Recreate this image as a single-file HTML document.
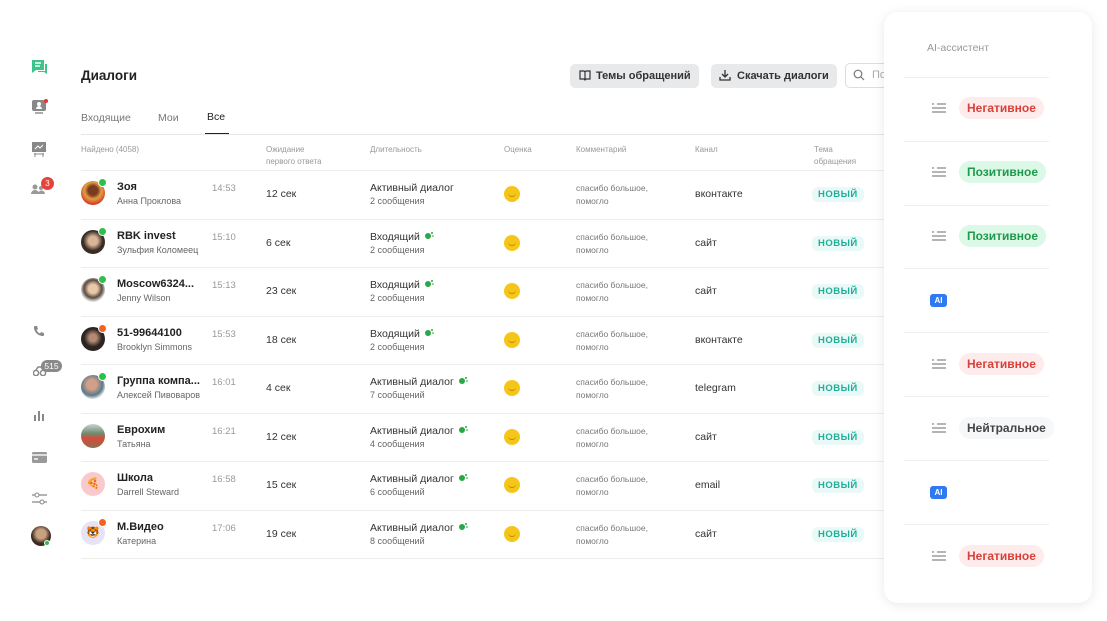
<!DOCTYPE html>
<html><head><meta charset="utf-8"><style>
*{margin:0;padding:0;box-sizing:border-box}
body{width:1107px;height:621px;background:#fff;font-family:"Liberation Sans","Noto Sans CJK SC",sans-serif;color:#222;position:relative;overflow:hidden}
.a{position:absolute;white-space:nowrap}
.row{position:absolute;left:81px;width:820px;height:48.5px;border-bottom:1px solid #ececec}
.av{position:absolute;left:0;top:10px;width:24px;height:24px;border-radius:50%}
.bd{position:absolute;left:17px;top:7px;width:9px;height:9px;border-radius:50%;border:1.5px solid #fff}
.nm{position:absolute;left:36px;top:10px;font-size:11px;font-weight:bold;color:#222}
.sb{position:absolute;left:36px;top:25px;font-size:9px;color:#666}
.tm{position:absolute;left:131px;top:12px;font-size:9.5px;color:#999}
.wt{position:absolute;left:185px;top:17px;font-size:10.5px;color:#333}
.du{position:absolute;left:289px;top:11px;font-size:10.5px;color:#333}
.dm{position:absolute;left:289px;top:25px;font-size:9px;color:#666}
.sm{position:absolute;left:423px;top:15px;width:16px;height:16px;border-radius:50%;background:#f5c518}
.sm:after{content:"";position:absolute;left:4px;top:6px;width:8px;height:4px;border-bottom:1px solid #c08a00;border-radius:0 0 5px 5px}
.cm{position:absolute;left:495px;top:11px;font-size:8.5px;color:#777;line-height:13px}
.ch{position:absolute;left:614px;top:17px;font-size:10.5px;color:#333}
.pl{position:absolute;left:731px;top:16px;padding:2px 6px;font-size:9.5px;font-weight:bold;color:#1fae98;background:#e8f9f7;border-radius:6px;letter-spacing:.5px}
.lf{display:inline-block;vertical-align:top;margin-left:4px}
.hd{position:absolute;top:144px;font-size:8px;color:#999;line-height:12px}
.panel{position:absolute;left:884px;top:12px;width:208px;height:591px;background:#fff;border-radius:14px;box-shadow:0 2px 12px rgba(0,0,0,.09)}
.sep{position:absolute;left:20px;width:145px;height:1px;background:#eeeeee}
.ic{position:absolute;left:47px;width:16px;height:12px}
.tg{position:absolute;left:75px;padding:4px 8px;border-radius:11px;font-size:12px;font-weight:600}
.neg{background:#fdeceb;color:#d9403a}
.pos{background:#dcf8e6;color:#1f9a4c}
.neu{background:#f6f7f8;color:#444}
.ai{position:absolute;left:46px;width:17px;height:13px;background:#2f7af0;border-radius:3px;color:#fff;font-size:8px;font-weight:bold;text-align:center;line-height:13px}
</style></head><body>

<svg class="a" style="left:31px;top:59px" width="17" height="17" viewBox="0 0 17 17"><path d="M1 1h12v10H5l-4 3z" fill="#3cc48a"/><path d="M4 4h6M4 7h5" stroke="#fff" stroke-width="1.4"/><path d="M14 5h2v10l-3-2H7v-1h7z" fill="#3cc48a"/></svg>
<svg class="a" style="left:31px;top:99px" width="17" height="17" viewBox="0 0 17 17"><rect x="1" y="1" width="14" height="11" rx="2" fill="#888"/><circle cx="8" cy="5" r="2" fill="#fff"/><path d="M5 10a3 3 0 0 1 6 0z" fill="#fff"/><rect x="4" y="13" width="8" height="2" fill="#aaa"/><circle cx="15" cy="2" r="2" fill="#e33"/></svg>
<svg class="a" style="left:31px;top:141px" width="17" height="17" viewBox="0 0 17 17"><rect x="1" y="1" width="14" height="10" fill="#888"/><path d="M4 8l3-3 2 2 3-3" stroke="#fff" fill="none"/><path d="M4 12v4M12 12v4M3 13h10" stroke="#888"/></svg>
<svg class="a" style="left:31px;top:183px" width="14" height="12" viewBox="0 0 14 12"><circle cx="4" cy="4" r="2.5" fill="#999"/><circle cx="10" cy="5" r="2" fill="#999"/><path d="M0 11a4 4 0 0 1 8 0zM7 11a3 3 0 0 1 7 0z" fill="#999"/></svg>
<div class="a" style="left:41px;top:177px;width:13px;height:13px;border-radius:50%;background:#e8413a;color:#fff;font-size:8px;text-align:center;line-height:13px">3</div>
<svg class="a" style="left:33px;top:325px" width="12" height="12" viewBox="0 0 12 12"><path d="M2 1l2 0 1 3-1.5 1a7 7 0 0 0 3.5 3.5L8 7l3 1v2c0 1-1 1-2 1A9 9 0 0 1 1 3c0-1 0-2 1-2z" fill="#888"/></svg>
<svg class="a" style="left:33px;top:366px" width="14" height="10" viewBox="0 0 14 10"><circle cx="3" cy="7" r="2.6" fill="none" stroke="#888" stroke-width="1.5"/><circle cx="10" cy="7" r="2.6" fill="none" stroke="#888" stroke-width="1.5"/><path d="M3 4l2-3h3l2 3" stroke="#888" fill="none" stroke-width="1.5"/></svg>
<div class="a" style="left:41px;top:360px;width:21px;height:12px;border-radius:6px;background:#8a8a8a;color:#fff;font-size:8.5px;text-align:center;line-height:12px">515</div>
<svg class="a" style="left:33px;top:409px" width="14" height="12" viewBox="0 0 14 12"><path d="M2 6v6M6 2v10M10 5v7" stroke="#888" stroke-width="2"/></svg>
<svg class="a" style="left:32px;top:452px" width="15" height="11" viewBox="0 0 15 11"><rect width="15" height="11" rx="1.5" fill="#999"/><rect y="2" width="15" height="2" fill="#ddd"/><rect x="2" y="6" width="4" height="2" fill="#ddd"/></svg>
<svg class="a" style="left:32px;top:492px" width="15" height="13" viewBox="0 0 15 13"><path d="M0 3h15M0 10h15" stroke="#888" stroke-width="1.2"/><circle cx="5" cy="3" r="2" fill="#fff" stroke="#888"/><circle cx="10" cy="10" r="2" fill="#fff" stroke="#888"/></svg>
<div class="a" style="left:31px;top:526px;width:20px;height:20px;border-radius:50%;background:radial-gradient(circle at 50% 40%,#c9a17f 30%,#3a2a22 60%)"></div>
<div class="a" style="left:44px;top:540px;width:6px;height:6px;border-radius:50%;background:#2cc04a;border:1px solid #fff"></div>

<div class="a" style="left:81px;top:68px;font-size:13.5px;font-weight:bold">Диалоги</div>
<div class="a" style="left:570px;top:64px;width:129px;height:24px;border-radius:5px;background:#e8e9ea;font-size:11px;font-weight:bold;color:#333;line-height:24px;padding-left:26px">Темы обращений</div>
<svg class="a" style="left:579px;top:70px" width="12" height="11" viewBox="0 0 12 11"><path d="M1 1h4l1 1 1-1h4v8H7l-1 1-1-1H1zM6 2v8" stroke="#333" fill="none" stroke-width="1.2"/></svg>
<div class="a" style="left:711px;top:64px;width:126px;height:24px;border-radius:5px;background:#e8e9ea;font-size:11px;font-weight:bold;color:#333;line-height:24px;padding-left:26px">Скачать диалоги</div>
<svg class="a" style="left:719px;top:69px" width="12" height="12" viewBox="0 0 12 12"><path d="M6 1v7M3 5l3 3 3-3M1 8v3h10V8" stroke="#333" fill="none" stroke-width="1.3"/></svg>
<div class="a" style="left:845px;top:63px;width:60px;height:25px;border-radius:5px;border:1px solid #ddd;font-size:11px;color:#aaa;line-height:23px;padding-left:26px">По</div>
<svg class="a" style="left:853px;top:69px" width="12" height="12" viewBox="0 0 12 12"><circle cx="5" cy="5" r="3.8" stroke="#777" fill="none" stroke-width="1.2"/><path d="M8 8l3 3" stroke="#777" stroke-width="1.2"/></svg>

<div class="a" style="left:81px;top:112px;font-size:10.5px;color:#777">Входящие</div>
<div class="a" style="left:158px;top:112px;font-size:10.5px;color:#777">Мои</div>
<div class="a" style="left:207px;top:111px;font-size:10.5px;color:#222">Все</div>
<div class="a" style="left:205px;top:133px;width:24px;height:2px;background:#222"></div>
<div class="a" style="left:81px;top:134px;width:820px;height:1px;background:#e6e6e6"></div>

<div class="hd" style="left:81px">Найдено (4058)</div>
<div class="hd" style="left:266px">Ожидание<br>первого ответа</div>
<div class="hd" style="left:370px">Длительность</div>
<div class="hd" style="left:504px">Оценка</div>
<div class="hd" style="left:576px">Комментарий</div>
<div class="hd" style="left:695px">Канал</div>
<div class="hd" style="left:814px">Тема<br>обращения</div>
<div class="a" style="left:81px;top:170px;width:820px;height:1px;background:#ececec"></div>

<div class="row" style="top:171px"><div class="av" style="background:radial-gradient(circle at 50% 40%,#7a3b22 25%,#e2a040 45%,#d53528 75%)"></div><div class="bd" style="background:#2cc04a"></div><div class="nm">Зоя</div><div class="sb">Анна Проклова</div><div class="tm">14:53</div><div class="wt">12 сек</div><div class="du">Активный диалог</div><div class="dm">2 сообщения</div><div class="sm"></div><div class="cm">спасибо большое,<br>помогло</div><div class="ch">вконтакте</div><div class="pl">НОВЫЙ</div></div>
<div class="row" style="top:219.5px"><div class="av" style="background:radial-gradient(circle at 50% 45%,#d9b596 25%,#3a2c25 55%)"></div><div class="bd" style="background:#2cc04a"></div><div class="nm">RBK invest</div><div class="sb">Зульфия Коломеец</div><div class="tm">15:10</div><div class="wt">6 сек</div><div class="du">Входящий<svg class="lf" width="11" height="9" viewBox="0 0 11 9"><circle cx="4" cy="5" r="3" fill="#2aa845"/><circle cx="8" cy="2" r="1" fill="#2aa845"/><path d="M8 5h2" stroke="#2aa845"/></svg></div><div class="dm">2 сообщения</div><div class="sm"></div><div class="cm">спасибо большое,<br>помогло</div><div class="ch">сайт</div><div class="pl">НОВЫЙ</div></div>
<div class="row" style="top:268px"><div class="av" style="background:radial-gradient(circle at 50% 45%,#e8c8a8 25%,#5a4a40 50%,#ddd 70%)"></div><div class="bd" style="background:#2cc04a"></div><div class="nm">Moscow6324...</div><div class="sb">Jenny Wilson</div><div class="tm">15:13</div><div class="wt">23 сек</div><div class="du">Входящий<svg class="lf" width="11" height="9" viewBox="0 0 11 9"><circle cx="4" cy="5" r="3" fill="#2aa845"/><circle cx="8" cy="2" r="1" fill="#2aa845"/><path d="M8 5h2" stroke="#2aa845"/></svg></div><div class="dm">2 сообщения</div><div class="sm"></div><div class="cm">спасибо большое,<br>помогло</div><div class="ch">сайт</div><div class="pl">НОВЫЙ</div></div>
<div class="row" style="top:316.5px"><div class="av" style="background:radial-gradient(circle at 50% 45%,#b58a74 20%,#2a2522 50%)"></div><div class="bd" style="background:#f26322"></div><div class="nm">51-99644100</div><div class="sb">Brooklyn Simmons</div><div class="tm">15:53</div><div class="wt">18 сек</div><div class="du">Входящий<svg class="lf" width="11" height="9" viewBox="0 0 11 9"><circle cx="4" cy="5" r="3" fill="#2aa845"/><circle cx="8" cy="2" r="1" fill="#2aa845"/><path d="M8 5h2" stroke="#2aa845"/></svg></div><div class="dm">2 сообщения</div><div class="sm"></div><div class="cm">спасибо большое,<br>помогло</div><div class="ch">вконтакте</div><div class="pl">НОВЫЙ</div></div>
<div class="row" style="top:365px"><div class="av" style="background:radial-gradient(circle at 45% 40%,#d2a088 25%,#5a7a8a 55%,#eee 75%)"></div><div class="bd" style="background:#2cc04a"></div><div class="nm">Группа компа...</div><div class="sb">Алексей Пивоваров</div><div class="tm">16:01</div><div class="wt">4 сек</div><div class="du">Активный диалог<svg class="lf" width="11" height="9" viewBox="0 0 11 9"><circle cx="4" cy="5" r="3" fill="#2aa845"/><circle cx="8" cy="2" r="1" fill="#2aa845"/><path d="M8 5h2" stroke="#2aa845"/></svg></div><div class="dm">7 сообщений</div><div class="sm"></div><div class="cm">спасибо большое,<br>помогло</div><div class="ch">telegram</div><div class="pl">НОВЫЙ</div></div>
<div class="row" style="top:413.5px"><div class="av" style="background:linear-gradient(#c8d4d8 0,#6f8a6a 40%,#d8493b 60%,#8a7050 100%)"></div><div class="nm">Еврохим</div><div class="sb">Татьяна</div><div class="tm">16:21</div><div class="wt">12 сек</div><div class="du">Активный диалог<svg class="lf" width="11" height="9" viewBox="0 0 11 9"><circle cx="4" cy="5" r="3" fill="#2aa845"/><circle cx="8" cy="2" r="1" fill="#2aa845"/><path d="M8 5h2" stroke="#2aa845"/></svg></div><div class="dm">4 сообщения</div><div class="sm"></div><div class="cm">спасибо большое,<br>помогло</div><div class="ch">сайт</div><div class="pl">НОВЫЙ</div></div>
<div class="row" style="top:462px"><div class="av" style="background:#f9c9cc;text-align:center;line-height:24px;font-size:11px">🍕</div><div class="nm">Школа</div><div class="sb">Darrell Steward</div><div class="tm">16:58</div><div class="wt">15 сек</div><div class="du">Активный диалог<svg class="lf" width="11" height="9" viewBox="0 0 11 9"><circle cx="4" cy="5" r="3" fill="#2aa845"/><circle cx="8" cy="2" r="1" fill="#2aa845"/><path d="M8 5h2" stroke="#2aa845"/></svg></div><div class="dm">6 сообщений</div><div class="sm"></div><div class="cm">спасибо большое,<br>помогло</div><div class="ch">email</div><div class="pl">НОВЫЙ</div></div>
<div class="row" style="top:510.5px"><div class="av" style="background:#e6e2f7;text-align:center;line-height:24px;font-size:11px">🐯</div><div class="bd" style="background:#f26322"></div><div class="nm">М.Видео</div><div class="sb">Катерина</div><div class="tm">17:06</div><div class="wt">19 сек</div><div class="du">Активный диалог<svg class="lf" width="11" height="9" viewBox="0 0 11 9"><circle cx="4" cy="5" r="3" fill="#2aa845"/><circle cx="8" cy="2" r="1" fill="#2aa845"/><path d="M8 5h2" stroke="#2aa845"/></svg></div><div class="dm">8 сообщений</div><div class="sm"></div><div class="cm">спасибо большое,<br>помогло</div><div class="ch">сайт</div><div class="pl">НОВЫЙ</div></div>

<div class="panel">
<div class="a" style="left:43px;top:30px;font-size:10.5px;color:#999">AI-ассистент</div>
<div class="sep" style="top:65px"></div>
<svg class="ic" style="top:90px" viewBox="0 0 16 12"><path d="M1 2h2M6 2h9M1 6h14M1 10h14" stroke="#888" stroke-width="1.2"/></svg>
<div class="tg neg" style="top:85px">Негативное</div>
<div class="sep" style="top:129px"></div>
<svg class="ic" style="top:154px" viewBox="0 0 16 12"><path d="M1 2h2M6 2h9M1 6h14M1 10h14" stroke="#888" stroke-width="1.2"/></svg>
<div class="tg pos" style="top:149px">Позитивное</div>
<div class="sep" style="top:193px"></div>
<svg class="ic" style="top:218px" viewBox="0 0 16 12"><path d="M1 2h2M6 2h9M1 6h14M1 10h14" stroke="#888" stroke-width="1.2"/></svg>
<div class="tg pos" style="top:213px">Позитивное</div>
<div class="sep" style="top:256px"></div>
<div class="ai" style="top:282px">AI</div>
<div class="sep" style="top:320px"></div>
<svg class="ic" style="top:346px" viewBox="0 0 16 12"><path d="M1 2h2M6 2h9M1 6h14M1 10h14" stroke="#888" stroke-width="1.2"/></svg>
<div class="tg neg" style="top:341px">Негативное</div>
<div class="sep" style="top:384px"></div>
<svg class="ic" style="top:410px" viewBox="0 0 16 12"><path d="M1 2h2M6 2h9M1 6h14M1 10h14" stroke="#888" stroke-width="1.2"/></svg>
<div class="tg neu" style="top:405px">Нейтральное</div>
<div class="sep" style="top:448px"></div>
<div class="ai" style="top:474px">AI</div>
<div class="sep" style="top:512px"></div>
<svg class="ic" style="top:538px" viewBox="0 0 16 12"><path d="M1 2h2M6 2h9M1 6h14M1 10h14" stroke="#888" stroke-width="1.2"/></svg>
<div class="tg neg" style="top:533px">Негативное</div>
</div>
</body></html>
